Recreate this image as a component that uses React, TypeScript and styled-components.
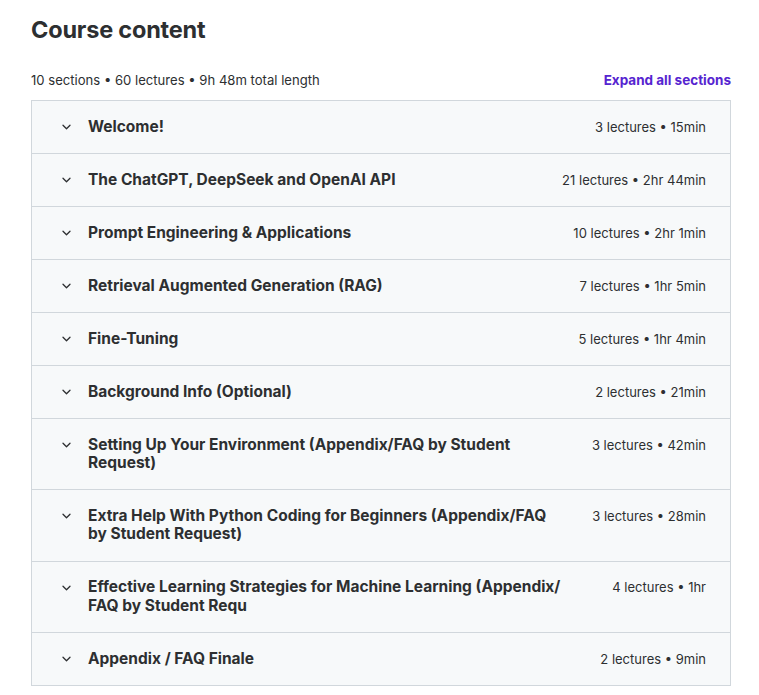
import React from "react";
import styled, { createGlobalStyle } from "styled-components";

const Global = createGlobalStyle`
  html, body { margin: 0; padding: 0; background: #fff; }
  body { font-family: Inter, "Noto Sans", sans-serif; color: #2d2f31; }
`;

const Page = styled.div`
  padding: 14px 28px 0 31px;
  width: 700px;
`;

const Title = styled.h2`
  margin: 0;
  font-size: 23.5px;
  line-height: 32px;
  font-weight: 700;
  letter-spacing: -0.2px;
  color: #2d2f31;
`;

const Summary = styled.div`
  display: flex;
  align-items: center;
  justify-content: space-between;
  margin-top: 24px;
  height: 20px;
`;

const Stats = styled.span`
  font-size: 13.1px;
  color: #2d2f31;
`;

const ExpandLink = styled.button`
  background: none;
  border: none;
  padding: 0;
  font-family: inherit;
  font-size: 13.5px;
  font-weight: 700;
  color: #5624d0;
  cursor: pointer;
`;

const Panel = styled.div`
  margin-top: 10px;
  border: 1px solid #d1d7dc;
  border-bottom: none;
`;

const Row = styled.div`
  display: flex;
  align-items: flex-start;
  gap: 32px;
  padding: 16.83px 24px 16.83px 28px;
  background: #f7f9fa;
  border-bottom: 1px solid #d1d7dc;
`;

const TitleCell = styled.div`
  display: flex;
  align-items: flex-start;
  flex: 1;
  gap: 16px;
`;

const Chevron = styled.span`
  display: flex;
  align-items: center;
  justify-content: center;
  height: 18.33px;
  width: 12px;
  flex: none;
  color: #2d2f31;
`;

const SectionName = styled.span`
  font-size: 15.5px;
  line-height: 18.33px;
  font-weight: 700;
  color: #2d2f31;
`;

const Meta = styled.span`
  font-size: 13px;
  line-height: 18.33px;
  color: #2d2f31;
  white-space: nowrap;
  flex: none;
`;

const sections: [string, string][] = [
  ["Welcome!", "3 lectures • 15min"],
  ["The ChatGPT, DeepSeek and OpenAI API", "21 lectures • 2hr 44min"],
  ["Prompt Engineering & Applications", "10 lectures • 2hr 1min"],
  ["Retrieval Augmented Generation (RAG)", "7 lectures • 1hr 5min"],
  ["Fine-Tuning", "5 lectures • 1hr 4min"],
  ["Background Info (Optional)", "2 lectures • 21min"],
  ["Setting Up Your Environment (Appendix/FAQ by Student Request)", "3 lectures • 42min"],
  ["Extra Help With Python Coding for Beginners (Appendix/FAQ by Student Request)", "3 lectures • 28min"],
  ["Effective Learning Strategies for Machine Learning (Appendix/FAQ by Student Requ", "4 lectures • 1hr"],
  ["Appendix / FAQ Finale", "2 lectures • 9min"],
];

const breakable = (s: string) => s.replace(/\/(?=\S)/g, "/\u200B");

const ChevronIcon = () => (
  <svg width="9" height="6" viewBox="0 0 9 6" fill="none">
    <path d="M1 1.2l3.5 3.5 3.5-3.5" stroke="currentColor" strokeWidth="1.3" strokeLinecap="round" strokeLinejoin="round" />
  </svg>
);

export default function App() {
  return (
    <>
      <Global />
      <Page>
        <Title>Course content</Title>
        <Summary>
          <Stats>10 sections • 60 lectures • 9h 48m total length</Stats>
          <ExpandLink>Expand all sections</ExpandLink>
        </Summary>
        <Panel>
          {sections.map(([name, meta]) => (
            <Row key={name}>
              <TitleCell>
                <Chevron>
                  <ChevronIcon />
                </Chevron>
                <SectionName>{breakable(name)}</SectionName>
              </TitleCell>
              <Meta>{meta}</Meta>
            </Row>
          ))}
        </Panel>
      </Page>
    </>
  );
}
